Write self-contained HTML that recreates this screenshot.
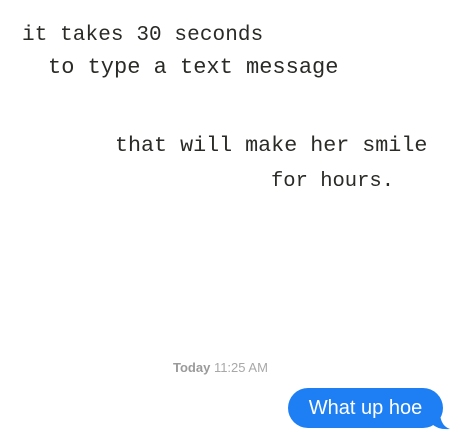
<!DOCTYPE html>
<html><head><style>
body{margin:0;width:460px;height:442px;background:#fff;position:relative;overflow:hidden}
.t{position:absolute;font-family:"Liberation Mono",monospace;color:#2a2a26;white-space:pre;line-height:1}
.ts{position:absolute;left:173px;top:360px;font-family:"Liberation Sans",sans-serif;font-size:13px;color:#a8a8a8}
.ts b{font-weight:bold;color:#9a9a9a}
.bub{position:absolute;left:288px;top:388px;width:155px;height:40px;background:#1d7ff3;border-radius:20px;color:#fff;font-family:"Liberation Sans",sans-serif;font-size:20px;line-height:40px;text-align:center}
.tail{position:absolute;left:432px;top:414px;width:18px;height:16px}
</style></head><body>
<div class="t" style="left:22px;top:25px;font-size:21px;letter-spacing:0.1px">it takes 30 seconds</div>
<div class="t" style="left:48px;top:57px;font-size:22px;letter-spacing:0px">to type a text message</div>
<div class="t" style="left:115px;top:135px;font-size:21.7px;letter-spacing:0px">that will make her smile</div>
<div class="t" style="left:271px;top:172px;font-size:20.5px;letter-spacing:0px">for hours.</div>
<div class="ts"><b>Today</b> 11:25 AM</div>
<svg class="tail" viewBox="0 0 18 16"><path d="M0 0 L8 0 Q9 12 18 15 Q6 16 0 10 Z" fill="#1d7ff3"/></svg>
<div class="bub">What up hoe</div>
</body></html>
